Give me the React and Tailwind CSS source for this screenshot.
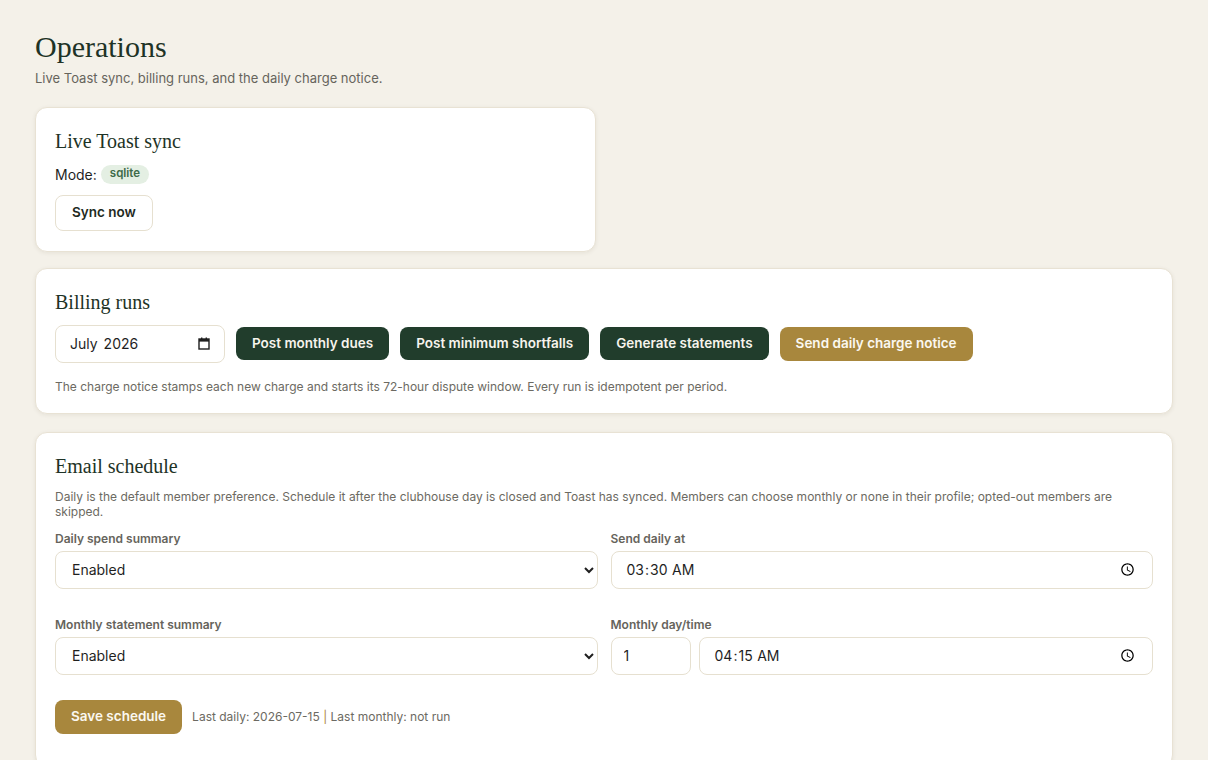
import React from "react";

const serif = { fontFamily: '"Liberation Serif", "Times New Roman", serif' };

const Card = ({ title, children, className = "" }) => (
  <section
    className={`bg-white border border-[#e8e2d4] rounded-xl shadow-[0_1px_4px_rgba(60,50,20,0.08)] px-[19px] pt-5 ${className}`}
  >
    <h2 style={serif} className="text-[20px] leading-[26px] text-[#1e3326] mb-[10px]">
      {title}
    </h2>
    {children}
  </section>
);

const DarkBtn = ({ children }) => (
  <button className="h-[33px] px-4 rounded-lg bg-[#213d2c] text-[#f7f4ec] text-[13.5px] font-semibold">
    {children}
  </button>
);

const GoldBtn = ({ children }) => (
  <button className="h-[34px] px-4 rounded-lg bg-[#a8873d] text-[#fbf8f0] text-[13.5px] font-semibold">
    {children}
  </button>
);

const Label = ({ children }) => (
  <label className="block text-[12px] leading-[16px] font-semibold text-[#66645c] mb-[4px]">{children}</label>
);

const fieldCls =
  "h-[38px] w-full rounded-lg border border-[#e6e0d0] bg-white text-[14px] text-[#1f1f1f] outline-none";

const CalendarIcon = () => (
  <svg width="12" height="13" viewBox="0 0 12 13" fill="none">
    <rect x="1" y="2" width="10" height="10" stroke="#1f1f1f" strokeWidth="1.4" />
    <rect x="1" y="2" width="10" height="2.6" fill="#1f1f1f" />
    <rect x="3" y="0.5" width="1.4" height="2" fill="#1f1f1f" />
    <rect x="7.6" y="0.5" width="1.4" height="2" fill="#1f1f1f" />
  </svg>
);

export default function App() {
  return (
    <div
      className="min-h-screen bg-[#f4f1e9] px-[35px] pt-[29px] pb-10"
      style={{ fontFamily: 'Inter, "Liberation Sans", sans-serif' }}
    >
      <h1 style={serif} className="text-[30px] leading-[36px] text-[#1e3326]">
        Operations
      </h1>
      <p className="text-[13px] text-[#66645c] mt-1 mb-[18px]">
        Live Toast sync, billing runs, and the daily charge notice.
      </p>

      <div className="flex flex-col gap-[18px]">
        <div className="grid grid-cols-2 gap-4 -mb-[2px]">
          <Card title="Live Toast sync" className="pb-5">
            <div className="flex items-center gap-1 text-[14px] text-[#1f1f1f] mb-[10px]">
              <span>Mode:</span>
              <span className="inline-flex items-center h-[19px] px-[9px] rounded-full bg-[#e4efe3] text-[#3f6b4a] text-[11.5px] font-semibold">
                sqlite
              </span>
            </div>
            <button className="h-[36px] px-4 rounded-lg border border-[#e6e0d0] bg-white text-[13.5px] font-semibold text-[#1e2a22]">
              Sync now
            </button>
          </Card>
        </div>

        <Card title="Billing runs" className="pb-[21px]">
          <div className="flex items-center gap-[11px]">
            <div className="h-[38px] w-[170px] flex items-center justify-between rounded-lg border border-[#e6e0d0] bg-white pl-[14px] pr-[14px] text-[14px] text-[#1f1f1f]">
              <span>
                July<span className="ml-1.5">2026</span>
              </span>
              <CalendarIcon />
            </div>
            <DarkBtn>Post monthly dues</DarkBtn>
            <DarkBtn>Post minimum shortfalls</DarkBtn>
            <DarkBtn>Generate statements</DarkBtn>
            <GoldBtn>Send daily charge notice</GoldBtn>
          </div>
          <p className="text-[12px] text-[#6c6a62] mt-[15px] -mb-[4px]">
            The charge notice stamps each new charge and starts its 72-hour dispute window. Every run is idempotent per period.
          </p>
        </Card>

        <Card title="Email schedule" className="pb-8">
          <p className="text-[12px] leading-[15px] text-[#6c6a62] mt-[2px] mb-3">
            Daily is the default member preference. Schedule it after the clubhouse day is closed and Toast has synced. Members can choose monthly or none in their profile; opted-out members are skipped.
          </p>
          <div className="grid grid-cols-2 gap-x-[13px] gap-y-[28px]">
            <div>
              <Label>Daily spend summary</Label>
              <select defaultValue="Enabled" className={`${fieldCls} px-3`}>
                <option>Enabled</option>
                <option>Disabled</option>
              </select>
            </div>
            <div>
              <Label>Send daily at</Label>
              <input type="time" defaultValue="03:30" className={`${fieldCls} px-3.5`} />
            </div>
            <div>
              <Label>Monthly statement summary</Label>
              <select defaultValue="Enabled" className={`${fieldCls} px-3`}>
                <option>Enabled</option>
                <option>Disabled</option>
              </select>
            </div>
            <div>
              <Label>Monthly day/time</Label>
              <div className="flex gap-2">
                <input
                  type="text"
                  defaultValue="1"
                  className="h-[38px] w-[80px] shrink-0 rounded-lg border border-[#e6e0d0] bg-white px-3 text-[14px] text-[#1f1f1f] outline-none"
                />
                <input type="time" defaultValue="04:15" className={`${fieldCls} px-3.5`} />
              </div>
            </div>
          </div>
          <div className="flex items-center gap-2.5 mt-[25px]">
            <GoldBtn>Save schedule</GoldBtn>
            <span className="text-[12px] text-[#6c6a62]">
              Last daily: 2026-07-15 <span className="text-[#a8873d]">|</span> Last monthly: not run
            </span>
          </div>
        </Card>
      </div>
    </div>
  );
}
